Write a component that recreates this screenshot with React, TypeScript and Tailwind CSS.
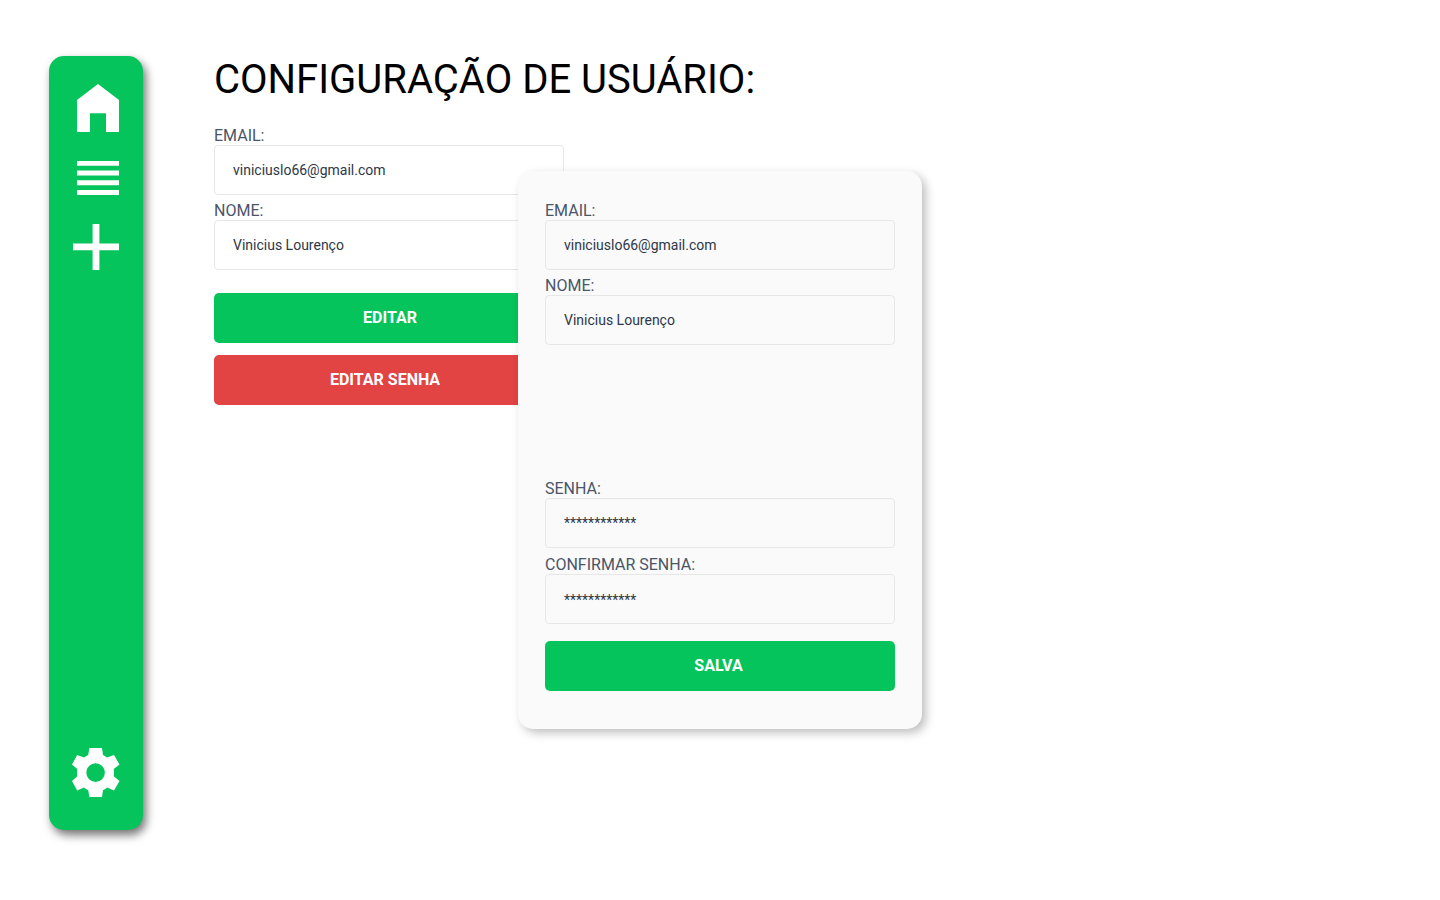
import React from "react";

type FieldProps = { label: string; value: string; className?: string; valueClass?: string };

function Field({ label, value, className = "", valueClass = "" }: FieldProps) {
  return (
    <div className={`flex flex-col ${className}`}>
      <span className="h-[17px] text-[16px] leading-[16px] text-[#4a5568]">{label}</span>
      <div className="flex h-[50px] w-[350px] items-center rounded border border-[#e7e7e7] pl-[18px] text-[14px] text-[#2d3748]">
        <span className={valueClass}>{value}</span>
      </div>
    </div>
  );
}

function Button({ label, className = "" }: { label: string; className?: string }) {
  return (
    <button className={`flex h-[50px] w-[350px] items-center justify-center rounded-[5px] pb-px text-[16px] font-bold text-white ${className}`}>
      {label}
    </button>
  );
}

function Sidebar() {
  return (
    <nav className="flex h-[774px] w-[94px] shrink-0 flex-col rounded-[15px] bg-[#06c45c] pt-7 pb-8 pl-[23px] text-white shadow-[3px_5px_10px_rgba(0,0,0,0.55)]">
      <svg className="ml-[5px]" width="42" height="48" viewBox="0 0 42 48" fill="currentColor">
        <path d="M21 0 42 16V48H29V29.3H13V48H0V16Z" />
      </svg>
      <svg className="mt-[29px] ml-[5px]" width="42" height="34" viewBox="0 0 42 34" fill="currentColor">
        <path d="M0 0H42V4.8H0ZM0 9.5H42V14.5H0ZM0 19.2H42V24.3H0ZM0 29H42V34H0Z" />
      </svg>
      <svg className="mt-[29px] ml-px" width="46" height="46" viewBox="0 0 46 46" fill="currentColor">
        <path d="M19.6 0H26.4V19.6H46V26.3H26.4V46H19.6V26.3H0V19.6H19.6Z" />
      </svg>
      <svg className="mt-auto" width="48" height="50" viewBox="0 0 48 50" fill="currentColor">
        <path
          fillRule="evenodd"
          d="M17.4 0H30L31 7Q33.2 8 35.2 9.5L42 7 47.5 16.5 41.7 21Q42.3 24.5 41.7 28.2L47.5 33 42 42.5 35.2 39.6Q33.2 41.2 31 42.2L30 49H17.4L16.2 42.2Q14 41.2 12 39.6L5.2 42.5 0 33 5.3 28.2Q4.7 24.5 5.3 21L0 16.5 5.2 7 12 9.5Q14 8 16.2 7ZM23.6 15.3A9.3 9.3 0 1 0 23.6 33.9 9.3 9.3 0 1 0 23.6 15.3Z"
        />
      </svg>
    </nav>
  );
}

export default function App() {
  return (
    <div className="relative flex h-[900px] w-[1440px] items-start overflow-hidden bg-white pt-14 pl-[49px] font-[Roboto,sans-serif]">
      <Sidebar />
      <main className="ml-[71px] flex flex-col pt-[4px]">
        <h1 className="h-[68px] text-[40px] leading-[40px] whitespace-nowrap text-black">CONFIGURAÇÃO DE USUÁRIO:</h1>
        <Field label="EMAIL:" value="viniciuslo66@gmail.com" />
        <Field label="NOME:" value="Vinicius Lourenço" className="mt-2" />
        <Button label="EDITAR" className="mt-[23px] bg-[#06c45c] pl-[2px]" />
        <Button label="EDITAR SENHA" className="mt-3 bg-[#e24343] pr-2" />
      </main>
      <section className="absolute top-[171px] left-[518px] flex h-[558px] w-[404px] flex-col rounded-[15px] bg-[#fafafa] px-[27px] pt-[32px] shadow-[4px_4px_10px_rgba(0,0,0,0.25)]">
        <Field label="EMAIL:" value="viniciuslo66@gmail.com" />
        <Field label="NOME:" value="Vinicius Lourenço" className="mt-2" />
        <Field label="SENHA:" value="************" className="mt-[136px]" valueClass="pt-px" />
        <Field label="CONFIRMAR SENHA:" value="************" className="mt-[9px]" valueClass="pt-[3px]" />
        <Button label="SALVA" className="mt-[17px] bg-[#06c45c] pr-[3px]" />
      </section>
    </div>
  );
}
